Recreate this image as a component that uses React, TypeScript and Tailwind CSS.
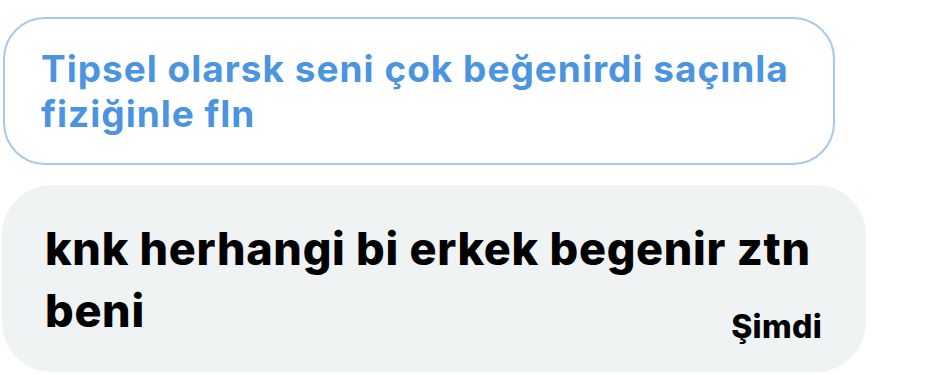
import React from "react";

export default function App() {
  return (
    <div className="w-[948px] h-[375px] bg-white overflow-hidden" style={{ fontFamily: "Inter, 'Noto Sans', sans-serif" }}>
      <div className="flex flex-col pt-[17px]">
        <div className="ml-[3px] w-[832px] h-[148px] rounded-[42px] border-[2px] border-[#a9c9e6] pl-[36px] pr-[10px] pt-[27px]">
          <p className="text-[37px] leading-[45px] font-bold text-[#4a94e0] whitespace-nowrap tracking-[1px]">
            Tipsel olarsk seni çok beğenirdi saçınla
            <br />
            fiziğinle fln
          </p>
        </div>
        <div className="mt-[20px] ml-[2px] w-[864px] h-[187px] rounded-[50px] bg-[#eff3f4] pl-[43px] pr-[44px] pt-[33px] flex flex-col">
          <p className="text-[45px] leading-[62px] font-extrabold text-black whitespace-nowrap tracking-[0.7px]">
            knk herhangi bi erkek begenir ztn
            <br />
            beni
          </p>
          <div className="flex justify-end -mt-[35px]">
            <span className="text-[32px] leading-[40px] font-extrabold text-black tracking-[0.3px]">Şimdi</span>
          </div>
        </div>
      </div>
    </div>
  );
}
